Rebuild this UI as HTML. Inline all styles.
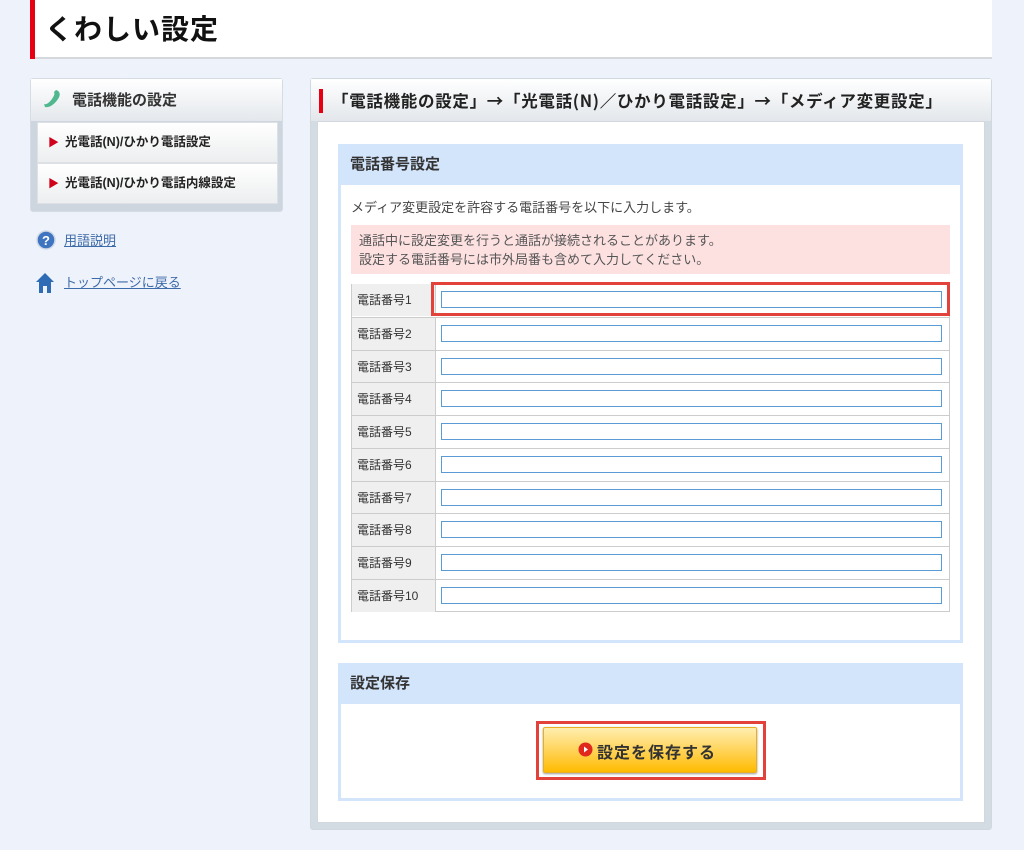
<!DOCTYPE html>
<html><head><meta charset="utf-8"><style>
body{margin:0;width:1024px;height:850px;background:#eef3fb;font-family:"Liberation Sans","Noto Sans CJK JP",sans-serif;position:relative;overflow:hidden;color:#333}
.a{position:absolute}
.hdr{left:30px;top:0;width:962px;height:57px;background:#fff;border-bottom:2px solid #d5d9de}
.hdr .bar{left:0;top:0;width:5px;height:59px;background:#e60012}
.hdr .t{left:15px;top:8px;font-size:28px;font-weight:bold;color:#111;letter-spacing:1px}
.lp{left:30px;top:78px;width:251px;height:132px;border:1px solid #d5dce3;background:#cdd6df;border-radius:3px}
.lp .tt{left:0;top:0;width:251px;height:42px;background:linear-gradient(#fff,#e4e8ec);font-size:15px;font-weight:bold;color:#333}
.it{left:6px;width:239px;height:39px;background:linear-gradient(#fff,#eceeef);border:1px solid #dde1e5;font-size:12.5px;font-weight:bold;color:#222;line-height:39px}
.it span{color:#d0021b;font-size:11px;margin:0 6px 0 10px}
.lk{font-size:13px;color:#3d6aa8;text-decoration:underline}
.mp{left:310px;top:78px;width:680px;height:750px;background:#d3dbe3;border:1px solid #d0d8e0;border-radius:3px}
.mh{left:0;top:0;width:680px;height:42px;background:linear-gradient(#fff,#e3e7eb)}
.in{left:6px;top:42px;width:666px;height:700px;background:#fff;border:1px solid #d3d8de}
.sec{background:#fff;border:3px solid #d3e5fb;box-sizing:border-box}
.sh{left:0;top:0;right:0;height:38px;background:#d3e5fb;font-size:15px;font-weight:bold;color:#333;line-height:36px;padding-left:9px}
.tbl{left:351px;top:284px;width:599px;height:328px;border:1px solid #ccc;box-sizing:border-box;background:#fff}
.row{left:0;width:597px;height:33px;border-top:1px solid #ccc;box-sizing:border-box}
.row .l{left:0;top:0;width:84px;height:32px;background:#efefef;border-right:1px solid #ccc;font-size:12px;line-height:32px;padding-left:5px;box-sizing:border-box;color:#333}
.row .f{left:89px;top:7px;width:501px;height:17px;border:1px solid #5a9bd5;box-sizing:border-box}
</style></head><body>
<div class="a hdr"><div class="a bar"></div><div class="a t">くわしい設定</div></div>

<div class="a lp">
 <div class="a tt">
  <svg class="a" style="left:10px;top:9px" width="22" height="22" viewBox="0 0 22 22"><path d="M15 2 C19 3 20 7 17 11 C13 17 8 20 4 19 L3 16 C5 17 8 15 11 11 C13 8 14 6 13 4 Z" fill="#4fb88e"/></svg>
  <div class="a" style="left:41px;top:10px">電話機能の設定</div>
 </div>
 <div class="a it" style="top:43px"><span>▶</span>光電話(N)/ひかり電話設定</div>
 <div class="a it" style="top:84px"><span>▶</span>光電話(N)/ひかり電話内線設定</div>
</div>

<svg class="a" style="left:36px;top:230px" width="20" height="20"><circle cx="10" cy="10" r="9" fill="#3f74c0" stroke="#cfd8e6" stroke-width="1.5"/><text x="10" y="15" text-anchor="middle" font-size="13" font-weight="bold" fill="#fff" font-family="Liberation Sans">?</text></svg>
<div class="a lk" style="left:64px;top:230px">用語説明</div>
<svg class="a" style="left:35px;top:272px" width="20" height="22"><path d="M10 1 L1 10 L4 10 L4 21 L8 21 L8 14 L12 14 L12 21 L16 21 L16 10 L19 10 Z" fill="#2e6db5"/></svg>
<div class="a lk" style="left:64px;top:272px">トップページに戻る</div>

<div class="a mp">
 <div class="a mh"><div class="a" style="left:8px;top:10px;width:4px;height:24px;background:#e60012"></div>
 <div class="a" style="left:21px;top:9px;font-size:16.5px;font-weight:bold;color:#222;font-family:'Noto Sans CJK JP',sans-serif;white-space:nowrap;letter-spacing:0.7px">「電話機能の設定」→「光電話(N)／ひかり電話設定」→「メディア変更設定」</div></div>
 <div class="a in"></div>
</div>

<div class="a sec" style="left:338px;top:144px;width:625px;height:499px"><div class="a sh">電話番号設定</div></div>
<div class="a" style="left:351px;top:197px;font-size:13px;color:#444">メディア変更設定を許容する電話番号を以下に入力します。</div>
<div class="a" style="left:351px;top:225px;width:599px;height:49px;background:#fde1e1;font-size:13px;color:#555;line-height:19px;padding:6px 0 0 8px;box-sizing:border-box">通話中に設定変更を行うと通話が接続されることがあります。<br>設定する電話番号には市外局番も含めて入力してください。</div>

<div class="a tbl">
<div class="a row" style="top:-1px;border-top:0;height:33px"><div class="a l">電話番号1</div><div class="a f"></div></div>
<div class="a row" style="top:32px"><div class="a l">電話番号2</div><div class="a f"></div></div>
<div class="a row" style="top:65px"><div class="a l">電話番号3</div><div class="a f"></div></div>
<div class="a row" style="top:97px"><div class="a l">電話番号4</div><div class="a f"></div></div>
<div class="a row" style="top:130px"><div class="a l">電話番号5</div><div class="a f"></div></div>
<div class="a row" style="top:163px"><div class="a l">電話番号6</div><div class="a f"></div></div>
<div class="a row" style="top:196px"><div class="a l">電話番号7</div><div class="a f"></div></div>
<div class="a row" style="top:228px"><div class="a l">電話番号8</div><div class="a f"></div></div>
<div class="a row" style="top:261px"><div class="a l">電話番号9</div><div class="a f"></div></div>
<div class="a row" style="top:294px"><div class="a l">電話番号10</div><div class="a f"></div></div>
</div>
<div class="a" style="left:431px;top:282px;width:519px;height:34px;border:3px solid #e2423a;box-sizing:border-box"></div>

<div class="a sec" style="left:338px;top:663px;width:625px;height:138px"><div class="a sh">設定保存</div></div>
<div class="a" style="left:536px;top:721px;width:230px;height:59px;border:3px solid #e2423a;box-sizing:border-box"></div>
<div class="a" style="left:543px;top:727px;width:214px;height:46px;background:linear-gradient(#ffeeb0,#ffd45a 50%,#ffbb00);border:1px solid #e8b020;box-sizing:border-box;border-radius:2px;box-shadow:0 1px 2px #999"></div>
<svg class="a" style="left:578px;top:742px" width="15" height="15"><circle cx="7.5" cy="7.5" r="7" fill="#e0281c"/><path d="M6 4.5 L10 7.5 L6 10.5 Z" fill="#fff"/></svg>
<div class="a" style="left:597px;top:739px;font-size:16px;font-weight:bold;color:#333;letter-spacing:1px">設定を保存する</div>
</body></html>
